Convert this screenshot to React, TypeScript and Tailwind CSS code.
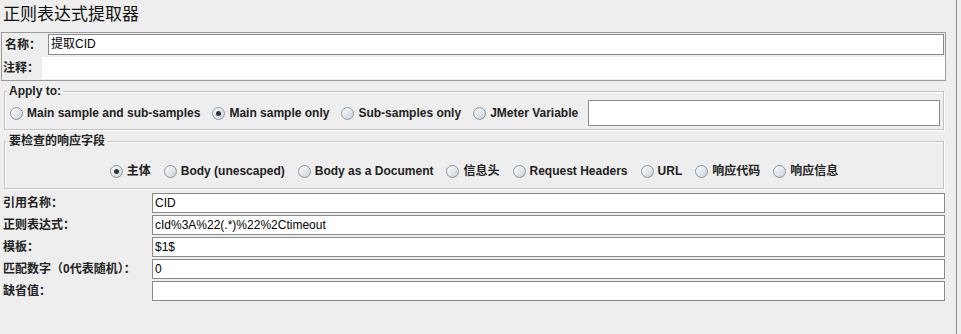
import React from 'react'

const font = { fontFamily: '"Liberation Sans", "Noto Sans CJK SC", sans-serif' }

function Radio({ label, checked = false }: { label: string; checked?: boolean }) {
  return (
    <label className="flex items-center gap-[4px] font-bold text-[12px] leading-[16px] text-[#222]">
      <span className="w-[13px] h-[13px] rounded-full border border-[#8a96a3] bg-gradient-to-br from-white to-[#c9d1da] flex items-center justify-center shrink-0">
        {checked && <span className="w-[5px] h-[5px] rounded-full bg-[#333]" />}
      </span>
      <span>{label}</span>
    </label>
  )
}

function Field({ label, value = '' }: { label: string; value?: string }) {
  return (
    <div className="flex items-center h-[20px]">
      <div className="w-[152px] pl-[3px] font-bold text-[12px] text-[#222]">{label}</div>
      <div className="w-[793px] h-[20px] bg-white border border-[#8a8a8a] pl-[2px] text-[12px] leading-[18px] text-black">
        {value}
      </div>
    </div>
  )
}

const groupBorder = 'border border-[#c2c2c2] shadow-[inset_1px_1px_0_#fff,1px_1px_0_#fff]'

export default function App() {
  const fields = ['主体', 'Body (unescaped)', 'Body as a Document', '信息头', 'Request Headers', 'URL', '响应代码', '响应信息']

  return (
    <div className="w-[961px] h-[334px] bg-[#eeeeee] flex overflow-hidden" style={font}>
      <div className="w-[957px] h-full border-r border-[#8c8c8c]">
        {/* Title */}
        <div className="h-[32px] pl-[3px] pt-[4px] text-[17px] leading-[22px] text-[#111]">正则表达式提取器</div>

        {/* Name / comment */}
        <div className="ml-[1px] w-[945px] border border-[#9a9a9a] pb-[1px]">
          <div className="flex items-center h-[23px]">
            <div className="w-[46px] pl-[3px] font-bold text-[12px] text-[#222]">名称：</div>
            <div className="flex-1 mr-[1px] h-[21px] bg-white border border-[#8a8a8a] pl-[2px] text-[12px] leading-[19px] text-black">
              提取CID
            </div>
          </div>
          <div className="flex items-center h-[22px] mt-[1px]">
            <div className="w-[40px] pl-[1px] font-bold text-[12px] text-[#222]">注释：</div>
            <div className="flex-1 h-[22px] bg-white" />
          </div>
        </div>

        {/* Apply to */}
        <fieldset className={`ml-[4px] w-[940px] mt-[3px] px-[5px] pt-[2px] pb-[3px] ${groupBorder}`}>
          <legend className="-ml-[3px] px-[2px] font-bold text-[12px] leading-[14px] text-[#222]">Apply to:</legend>
          <div className="flex items-center h-[26px] gap-[12px]">
            <Radio label="Main sample and sub-samples" />
            <Radio label="Main sample only" checked />
            <Radio label="Sub-samples only" />
            <Radio label="JMeter Variable" />
            <div className="flex-1 h-[26px] ml-[-2px] mr-[-2px] bg-white border border-[#8a8a8a]" />
          </div>
        </fieldset>

        {/* Field to check */}
        <fieldset className={`ml-[4px] w-[940px] mt-[4px] pt-[15px] pb-[9px] ${groupBorder}`}>
          <legend className="ml-[2px] px-[2px] font-bold text-[12px] leading-[14px] text-[#222]">要检查的响应字段</legend>
          <div className="flex items-center justify-center h-[16px] gap-[13px]">
            {fields.map(function (f, i) {
              return <Radio key={f} label={f} checked={i === 0} />
            })}
          </div>
        </fieldset>

        {/* Settings */}
        <div className="mt-[4px] flex flex-col gap-[2px]">
          <Field label="引用名称：" value="CID" />
          <Field label="正则表达式：" value="cId%3A%22(.*)%22%2Ctimeout" />
          <Field label="模板：" value="$1$" />
          <Field label="匹配数字（0代表随机）：" value="0" />
          <Field label="缺省值：" />
        </div>
      </div>
    </div>
  )
}
